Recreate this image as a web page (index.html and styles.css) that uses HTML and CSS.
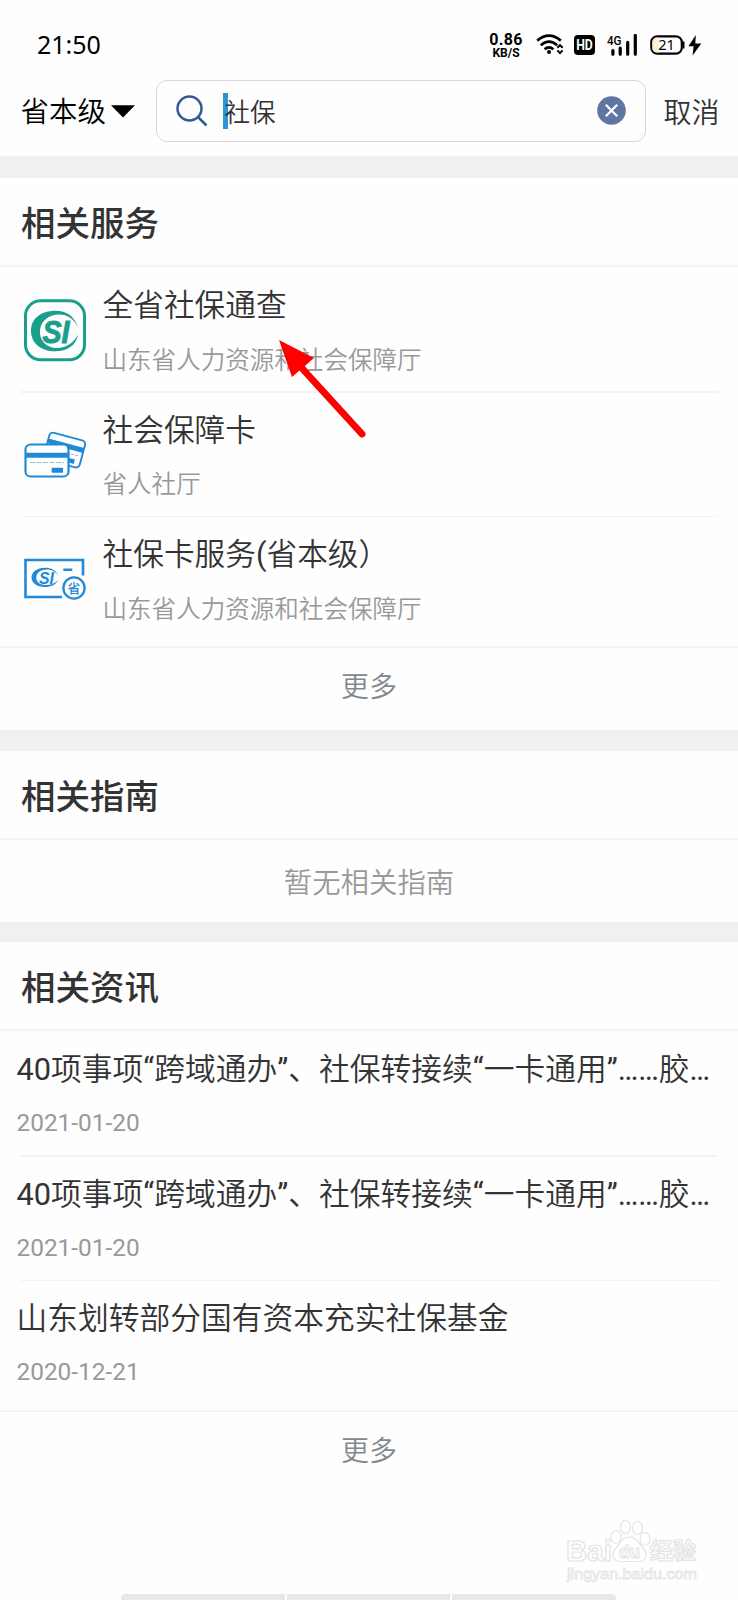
FILE: index.html
```html
<!DOCTYPE html>
<html lang="zh-CN">
<head>
<meta charset="utf-8">
<title>搜索</title>
<link rel="stylesheet" href="styles.css">
</head>
<body>
<div class="screen">
  <header class="status">
    <span class="clock">21:50</span>
    <div class="indicators">
      <div class="speed"><span class="speed-value">0.86</span><span class="speed-unit">KB/S</span></div>
      <svg class="wifi" width="28" height="24" viewBox="0 0 28 24" fill="none" stroke="#000" stroke-width="2.7">
        <path d="M1.2 7.6Q13 -2.2 24.8 7.6M4.800 12.200Q13 5.200 21.200 12.200M8.600 16.200Q13 12.400 17.400 16.200"/>
        <circle cx="13" cy="19" r="2" fill="#000" stroke="none"/>
        <path d="M21.300 14.800L24 12.200L26.700 14.800M21.300 17.400L24 20L26.700 17.400" stroke-width="2"/>
      </svg>
      <svg class="hd" width="21" height="20" viewBox="0 0 21 20"><rect width="21" height="20" rx="4"/><text x="2.200" y="15.300" class="hd-text" textLength="16.600" lengthAdjust="spacingAndGlyphs">HD</text></svg>
      <svg class="signal" width="30" height="22" viewBox="0 0 30 22">
        <text x="0" y="11.300" class="net" textLength="14.500" lengthAdjust="spacingAndGlyphs">4G</text>
        <path d="M5.900 16.500v3.700M13.200 14v6.200M20.700 8.300v11.900M28.300 1.500v18.700" stroke="#000" stroke-width="3.200" stroke-linecap="round"/>
      </svg>
      <svg class="battery" width="52" height="22" viewBox="0 0 52 22">
        <rect x="1.300" y="2.300" width="30.500" height="17.400" rx="6" fill="#fff" stroke="#000" stroke-width="2.200"/>
        <path d="M8.500 3.400H7A4.800 4.800 0 0 0 2.400 8v6A4.800 4.800 0 0 0 7 18.600h1.500z" fill="#fdf0d0"/>
        <path d="M33.300 7.500v7" stroke="#000" stroke-width="2.400"/>
        <text x="16.500" y="16.300" class="level" text-anchor="middle">21</text>
        <path d="M45.800 1L38.400 12.300h5.200L42.600 21.400L51.300 9.400h-6z" fill="#000"/>
      </svg>
    </div>
  </header>

  <div class="searchbar">
    <span class="region">省本级</span>
    <svg class="caret" width="24" height="13" viewBox="0 0 24 13"><path d="M0 .3H24L12 12.600z"/></svg>
    <div class="field">
      <svg class="lens" width="32" height="32" viewBox="0 0 32 32" fill="none" stroke="#335a94" stroke-width="2.500"><circle cx="13.500" cy="13.500" r="12"/><path d="M22 22L30.500 30.500"/></svg>
      <span class="query"><span>社保</span></span>
      <svg class="clear" width="29" height="29" viewBox="0 0 29 29"><circle cx="14.500" cy="14.500" r="14.300" fill="#6076a2"/><path d="M8.800 8.800L20.200 20.200M20.200 8.800L8.800 20.200" stroke="#fff" stroke-width="2.300"/></svg>
    </div>
    <span class="cancel">取消</span>
  </div>

  <section class="services">
    <h2>相关服务</h2>
    <ul>
      <li>
        <svg class="icon" width="64" height="64" viewBox="0 0 64 64">
          <rect x="2.500" y="1.800" width="59" height="59" rx="15" fill="none" stroke="#1a9f8d" stroke-width="3"/>
          <path fill="#1a9f8d" d="M55.300 29C52 18 44 11.700 33 11.700C17 11.700 8 20 8 32C8 44 18 52.300 32 52.300C45 52.300 53 46 55.300 35.500C50 45 42 49 34 49C23 49 16 41 17 31C18 21 27 15.500 36 15.500C45 15.500 51 20 55.300 29z"/>
          <text x="19.500" y="44.300" class="si" font-size="31" textLength="27" lengthAdjust="spacingAndGlyphs" fill="#1a9f8d" stroke="#1a9f8d">SI</text>
        </svg>
        <div><h3>全省社保通查</h3><p>山东省人力资源和社会保障厅</p></div>
      </li>
      <li>
        <svg class="icon" width="64" height="64" viewBox="0 0 64 64">
          <g transform="translate(-1 -.8) rotate(15 43 27)"><rect x="24" y="13" width="37" height="28" rx="4" fill="#fff" stroke="#2289d6" stroke-width="1.900"/><path d="M24 20h37v5H24z" fill="#2289d6"/><path d="M47 33.500h8v4.500h-8z" fill="#2289d6"/><path d="M46 29h11" stroke="#91bfe2" stroke-dasharray="3 1"/></g>
          <rect x="2.500" y="20.500" width="43" height="32" rx="5" fill="#fff" stroke="#2289d6" stroke-width="2.200"/>
          <path d="M2.500 28.700h43v5h-43zM28.700 43.700h11.300v5H28.700z" fill="#2289d6"/><path d="M7 38.500h34" stroke="#91bfe2" stroke-dasharray="5 1.500"/>
        </svg>
        <div><h3>社会保障卡</h3><p>省人社厅</p></div>
      </li>
      <li>
        <svg class="icon" width="64" height="64" viewBox="0 0 64 64" fill="none" stroke="#2289d6">
          <path d="M60 27.500V12H2.500V49H39M40.300 21.800h9" stroke-width="2.600"/>
          <path fill="#2289d6" stroke="none" d="M35.500 28C33 22 28 19.700 22 19.700C14 19.700 8.500 24 8.500 29.500C8.500 35 14 39 22 39C28 39 33 36.500 35.500 32C32 35.500 28 37 23 37C16.500 37 13 33.500 13.300 29C13.700 24.500 18 21.500 24 21.500C29 21.500 33 24 35.500 28z"/>
          <text x="16" y="36" class="si" font-size="17" textLength="15" lengthAdjust="spacingAndGlyphs" fill="#2289d6" stroke="none">SI</text>
          <circle cx="51" cy="40" r="10.600" fill="#fff" stroke-width="2.300"/>
          <text x="51" y="44.700" class="badge" text-anchor="middle" fill="#2289d6" stroke="none">省</text>
        </svg>
        <div><h3>社保卡服务<span class="latin">(</span>省本级）</h3><p>山东省人力资源和社会保障厅</p></div>
      </li>
    </ul>
    <div class="more">更多</div>
  </section>

  <section class="guides">
    <h2>相关指南</h2>
    <div class="empty">暂无相关指南</div>
  </section>

  <section class="news">
    <h2>相关资讯</h2>
    <ul>
      <li><h3><span class="latin">40</span>项事项<span class="latin">“</span>跨域通办<span class="latin">”</span>、社保转接续<span class="latin">“</span>一卡通用<span class="latin">”……</span>胶<span class="latin">…</span></h3><p>2021-01-20</p></li>
      <li><h3><span class="latin">40</span>项事项<span class="latin">“</span>跨域通办<span class="latin">”</span>、社保转接续<span class="latin">“</span>一卡通用<span class="latin">”……</span>胶<span class="latin">…</span></h3><p>2021-01-20</p></li>
      <li><h3>山东划转部分国有资本充实社保基金</h3><p>2020-12-21</p></li>
    </ul>
    <div class="more">更多</div>
  </section>

  <footer class="navhint"><i></i><i></i><i></i></footer>

  <svg class="pointer" width="90" height="102" viewBox="0 0 90 102">
    <path d="M20 25L83 94" stroke="#fe0000" stroke-width="7" stroke-linecap="round"/><path d="M0 0L35 18L13 37z" fill="#fe0000"/>
  </svg>
  <svg class="watermark" width="140" height="66" viewBox="0 0 140 66">
    <g fill="#fff" stroke="#e4e4e4" stroke-width="1.200">
      <text x="1" y="42" class="wm-name" textLength="46" lengthAdjust="spacingAndGlyphs">Bai</text>
      <ellipse cx="51" cy="18" rx="5" ry="6.500"/><ellipse cx="60.500" cy="8" rx="5" ry="6.500"/><ellipse cx="72.500" cy="9" rx="5" ry="6.500"/><ellipse cx="80" cy="20" rx="5" ry="6.500"/>
      <path d="M65 18C57 18 55 25 51 29C46 34 47 42 55 42.500H74C82 42 83 34 78 29C74 25 72 18 65 18z"/>
      <text x="54" y="39" class="wm-du" textLength="21" lengthAdjust="spacingAndGlyphs">du</text>
      <text x="85" y="40" class="wm-cn" textLength="46" lengthAdjust="spacingAndGlyphs">经验</text>
      <text x="2" y="60" class="wm-url" textLength="130" lengthAdjust="spacingAndGlyphs">jingyan.baidu.com</text>
    </g>
  </svg>
</div>
</body>
</html>
```
FILE: styles.css
```css
* { box-sizing: border-box; margin: 0; padding: 0; }
body { background: #fff; font-family: Roboto, "Noto Sans CJK SC", sans-serif; color: #333; }
.screen { position: relative; width: 738px; height: 1600px; overflow: hidden; display: flex; flex-direction: column; background: #fefefe; }
ul { list-style: none; }
h2, h3 { font-weight: 400; }
svg { display: block; flex: none; }

.status { height: 74px; padding: 16px 36px 0 37px; display: flex; justify-content: space-between; align-items: center; color: #000; }
.clock { font: 25px/36px "Noto Sans", sans-serif; padding-bottom: 2px; }
.indicators { display: flex; align-items: center; }
.speed { width: 34px; padding-top: 2px; display: flex; flex-direction: column; align-items: center; font-weight: 700; }
.speed-value { font-size: 16px; line-height: 14px; letter-spacing: .3px; }
.speed-unit { font-size: 12px; line-height: 12px; }
.wifi { margin-left: 13px; }
.hd { margin-left: 10px; }
.hd-text { font: 700 15px Roboto, sans-serif; fill: #fff; }
.signal { margin-left: 12px; }
.net { font: 500 13px Roboto, sans-serif; }
.battery { margin-left: 13px; }
.level { font: 14.500px "Noto Sans", sans-serif; }

.searchbar { height: 82px; padding: 6px 0 15px 20.500px; display: flex; align-items: center; font-weight: 350; }
.region { width: 85px; padding-top: 5px; font-size: 28.500px; line-height: 60px; color: #000; white-space: nowrap; }
.caret { margin: 1px 0 0 5.500px; }
.field { width: 490px; height: 62px; margin-left: 20.500px; padding: 0 19px; border: 1.500px solid #d8d8d8; border-radius: 11px; display: flex; align-items: center; }
.query { margin-left: 15px; flex: 1; display: flex; align-items: center; font-size: 25.600px; line-height: 36px; }
.query::before { content: ""; width: 5px; height: 36px; margin-right: -4px; background: #2b94d6; }
.query span { position: relative; padding: 4px 0 0 1px; }
.cancel { margin-left: 18px; padding-top: 6px; font-size: 28px; line-height: 60px; }

section { border-top: 21px solid #f0f0f0; }
.services { height: 574px; border-top-width: 22px; }
.guides { height: 192px; }
.news { height: 652px; border-top-width: 20px; }
h2 { height: 89px; padding-left: 21px; border-bottom: 2px solid #f4f4f4; font-size: 34.500px; line-height: 92px; font-weight: 500; }
.news h2 { line-height: 93px; }
li { height: 124.600px; display: flex; position: relative; }
li:not(:last-child)::after { content: ""; position: absolute; left: 20px; right: 20px; bottom: -1px; height: 1.500px; background: #f3f3f3; }
h3 { font-size: 30.700px; line-height: 44px; white-space: nowrap; font-weight: 350; }
.latin { font-weight: 400; }
p { font-size: 24.550px; line-height: 36px; color: #999; font-weight: 350; }
.services li { padding: 17px 20px 0 22.500px; gap: 16px; }
.icon { margin-top: 15px; }
.services p { margin-top: 14.500px; }
.news li { padding: 17px 20px 0 16.500px; flex-direction: column; }
.news h3 { font-size: 30.750px; }
.news p { margin-top: 13px; font-size: 24.400px; font-weight: 400; }
ul { height: 381px; border-bottom: 2px solid #f4f4f4; }
.more { font-size: 28px; line-height: 79px; text-align: center; color: #808890; font-weight: 350; }
.empty { font-size: 28.400px; line-height: 87px; text-align: center; color: #999; font-weight: 350; }
.si { font-family: "Liberation Sans", sans-serif; font-weight: 700; font-style: italic; }
.badge { font: 500 13px "Noto Sans CJK SC", sans-serif; }

.navhint { height: 6px; width: 495px; margin: auto 0 0 121px; display: flex; gap: 2px; overflow: hidden; border-radius: 4px 4px 0 0; }
.navhint i { flex: 1; background: #e8e8e8; }
.pointer { position: absolute; left: 279px; top: 340px; }
.watermark { position: absolute; left: 565px; top: 1519px; }
.wm-name { font: 700 29px "Liberation Sans", sans-serif; }
.wm-du { font: 700 19px "Liberation Sans", sans-serif; }
.wm-cn { font: 700 23px "Noto Sans CJK SC", sans-serif; }
.wm-url { font: 15px "Liberation Sans", sans-serif; stroke-width: .8px; }
```
